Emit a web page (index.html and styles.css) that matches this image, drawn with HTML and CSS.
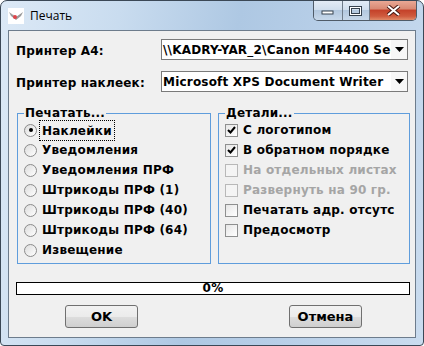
FILE: index.html
```html
<!DOCTYPE html>
<html lang="ru">
<head>
    <meta charset="utf-8">
    <title>Печать</title>
    <link rel="stylesheet" href="styles.css">
</head>
<body>
    <div class="window">
        <div class="titlebar">
            <svg class="app-icon" width="16" height="16" viewBox="0 0 16 16">
                <rect width="16" height="16" fill="#fff"/>
                <path d="M1 4 L8 9 L15 4 L13 8 L8 12 L3 8 Z" fill="#9a9a9a"/>
                <path d="M2 5 L8 9 L6 7 Z" fill="#c8c8c8"/>
                <circle cx="7" cy="9" r="2" fill="#e0454a"/>
            </svg>
            <span class="title">Печать</span>
            <div class="caption">
                <div class="cap-btn cap-min">
                    <svg width="14" height="6" viewBox="0 0 14 6"><rect x="1" y="1" width="11" height="3" fill="#fff" stroke="#36424f"/></svg>
                </div>
                <div class="cap-btn cap-max">
                    <svg width="14" height="10" viewBox="0 0 14 10"><rect x="1.5" y="1.5" width="10" height="7" fill="none" stroke="#36424f" stroke-width="3"/><rect x="1.5" y="1.5" width="10" height="7" fill="none" stroke="#fff" stroke-width="1"/></svg>
                </div>
                <div class="cap-btn cap-close">
                    <svg width="15" height="11" viewBox="0 0 15 11"><path d="M2 1 L13 10 M13 1 L2 10" stroke="#4a1a14" stroke-width="4"/><path d="M2 1 L13 10 M13 1 L2 10" stroke="#fff" stroke-width="2"/></svg>
                </div>
            </div>
        </div>

        <div class="client">
            <div class="printer-row">
                <span class="printer-label">Принтер А4:</span>
                <div class="combo">
                    <span class="combo-text">\\KADRY-YAR_2\Canon MF4400 Series</span>
                    <span class="combo-arrow"><svg width="9" height="5" viewBox="0 0 9 5"><path d="M0 0 H9 L4.5 5 Z" fill="#000"/></svg></span>
                </div>
            </div>
            <div class="printer-row second">
                <span class="printer-label">Принтер наклеек:</span>
                <div class="combo">
                    <span class="combo-text">Microsoft XPS Document Writer</span>
                    <span class="combo-arrow"><svg width="9" height="5" viewBox="0 0 9 5"><path d="M0 0 H9 L4.5 5 Z" fill="#000"/></svg></span>
                </div>
            </div>

            <div class="groups">
                <fieldset class="group">
                    <legend>Печатать...</legend>
                    <div class="opt"><span class="radio on"></span><span class="focus">Наклейки</span></div>
                    <div class="opt"><span class="radio"></span>Уведомления</div>
                    <div class="opt"><span class="radio"></span>Уведомления ПРФ</div>
                    <div class="opt"><span class="radio"></span>Штрикоды ПРФ (1)</div>
                    <div class="opt"><span class="radio"></span>Штрикоды ПРФ (40)</div>
                    <div class="opt"><span class="radio"></span>Штрикоды ПРФ (64)</div>
                    <div class="opt"><span class="radio"></span>Извещение</div>
                </fieldset>
                <fieldset class="group">
                    <legend>Детали...</legend>
                    <div class="opt"><span class="check on"><svg width="9" height="8" viewBox="0 0 9 8"><path d="M1 4 L3.5 6.5 L8 1" fill="none" stroke="#000" stroke-width="2"/></svg></span>С логотипом</div>
                    <div class="opt"><span class="check on"><svg width="9" height="8" viewBox="0 0 9 8"><path d="M1 4 L3.5 6.5 L8 1" fill="none" stroke="#000" stroke-width="2"/></svg></span>В обратном порядке</div>
                    <div class="opt disabled"><span class="check"></span>На отдельных листах</div>
                    <div class="opt disabled"><span class="check"></span>Развернуть на 90 гр.</div>
                    <div class="opt"><span class="check"></span>Печатать адр. отсутс</div>
                    <div class="opt"><span class="check"></span>Предосмотр</div>
                </fieldset>
            </div>

            <div class="progress">0%</div>

            <div class="buttons">
                <button class="btn btn-ok">OK</button>
                <button class="btn btn-cancel">Отмена</button>
            </div>
        </div>
    </div>
</body>
</html>
```

FILE: styles.css
```css
body {
    margin: 0;
    background-color: #ffffff;
    font-family: "DejaVu Sans", Verdana, sans-serif;
}
.window {
    width: 424px;
    height: 346px;
    box-sizing: border-box;
    border: 1px solid #3b4856;
    border-radius: 7px 7px 4px 4px;
    padding: 0 7px 7px 7px;
    display: flex;
    flex-direction: column;
    background: linear-gradient(100deg, #dce9f6 0%, #c9dcef 25%, #aec8e3 50%, #b8cfe8 70%, #cadcef 100%);
    overflow: hidden;
}
.titlebar {
    height: 29px;
    display: flex;
    align-items: flex-start;
}
.app-icon {
    margin: 7px 0 0 0;
}
.title {
    margin: 7px 0 0 6px;
    font-family: "Open Sans", "Noto Sans", sans-serif;
    font-size: 12px;
    line-height: 16px;
    color: #000;
}
.caption {
    margin-left: auto;
    margin-right: -1px;
    display: flex;
    height: 19px;
    border: 1px solid #4f5b68;
    border-top: none;
    border-radius: 0 0 5px 5px;
    overflow: hidden;
}
.cap-btn {
    height: 19px;
    display: flex;
    align-items: center;
    justify-content: center;
}
.cap-min, .cap-max {
    border-right: 1px solid #6f7c8a;
    background: linear-gradient(#e3ecf6 0%, #d1dfee 45%, #b3c8df 50%, #c7d8ea 100%);
}
.cap-min {
    width: 28px;
}
.cap-max {
    width: 26px;
}
.cap-min svg {
    margin-top: 5px;
}
.cap-close {
    width: 46px;
    background: linear-gradient(#e9a895 0%, #d98a74 40%, #c5432b 50%, #cf5b3e 80%, #e08a68 100%);
}
.client {
    flex: 1;
    border: 1px solid #6d7c8c;
    background-color: #f0f0f0;
    padding: 8px 7px 0 7px;
    font-size: 12px;
    font-weight: bold;
    letter-spacing: 0.2px;
    color: #000;
}
.printer-row {
    display: flex;
    align-items: center;
    height: 21px;
}
.printer-row.second {
    margin-top: 11px;
}
.printer-label {
    width: 145px;
    flex: none;
    padding-top: 3px;
}
.combo {
    width: 247px;
    height: 21px;
    box-sizing: border-box;
    border: 1px solid #7a7a7a;
    background-color: #fff;
    display: flex;
    align-items: center;
}
.combo-text {
    flex: 1;
    overflow: hidden;
    white-space: nowrap;
    padding-left: 1px;
}
.combo-arrow {
    width: 16px;
    height: 19px;
    flex: none;
    display: flex;
    align-items: center;
    justify-content: center;
    background-color: #f7f7f7;
}
.groups {
    display: grid;
    grid-template-columns: 194px 192px;
    column-gap: 7px;
    margin: 14px 0 0 1px;
}
.group {
    margin: 0;
    padding: 0 0 0 6px;
    height: 158px;
    box-sizing: border-box;
    border: 1px solid #5f9ddc;
}
.group legend {
    padding: 0 1px;
    line-height: 14px;
}
.opt {
    display: flex;
    align-items: center;
    height: 20px;
    white-space: nowrap;
}
.radio {
    width: 11px;
    height: 11px;
    border: 1px solid #8b8b8b;
    border-radius: 50%;
    margin-right: 5px;
    background: linear-gradient(135deg, #dcdcdc, #ffffff);
    display: flex;
    align-items: center;
    justify-content: center;
}
.radio.on::after {
    content: "";
    width: 4px;
    height: 4px;
    border-radius: 50%;
    background-color: #000;
}
.focus {
    outline: 1px dotted #000;
    padding: 3px 2px 2px 2px;
    margin-left: -2px;
}
.check {
    width: 11px;
    height: 11px;
    border: 1px solid #8e8f8f;
    background: linear-gradient(135deg, #e6e6e6, #ffffff);
    margin-right: 5px;
    display: flex;
    align-items: center;
    justify-content: center;
}
.disabled {
    color: #a5a5a5;
}
.disabled .check {
    border-color: #b8b8b8;
    background: #f4f4f4;
}
.progress {
    margin: 18px -2px 0 0;
    height: 13px;
    box-sizing: border-box;
    border: 1px solid #000;
    background-color: #fff;
    font-size: 12px;
    line-height: 11px;
    text-align: center;
}
.buttons {
    display: flex;
    margin-top: 10px;
}
.btn {
    width: 73px;
    height: 23px;
    border: 1px solid #707070;
    border-radius: 3px;
    background: linear-gradient(#f2f2f2 0%, #ebebeb 50%, #dddddd 51%, #cfcfcf 100%);
    font-family: "DejaVu Sans", Verdana, sans-serif;
    font-size: 13px;
    font-weight: bold;
    color: #000;
    padding: 0;
}
.btn-ok {
    margin-left: 49px;
}
.btn-cancel {
    margin-left: 151px;
}
```
